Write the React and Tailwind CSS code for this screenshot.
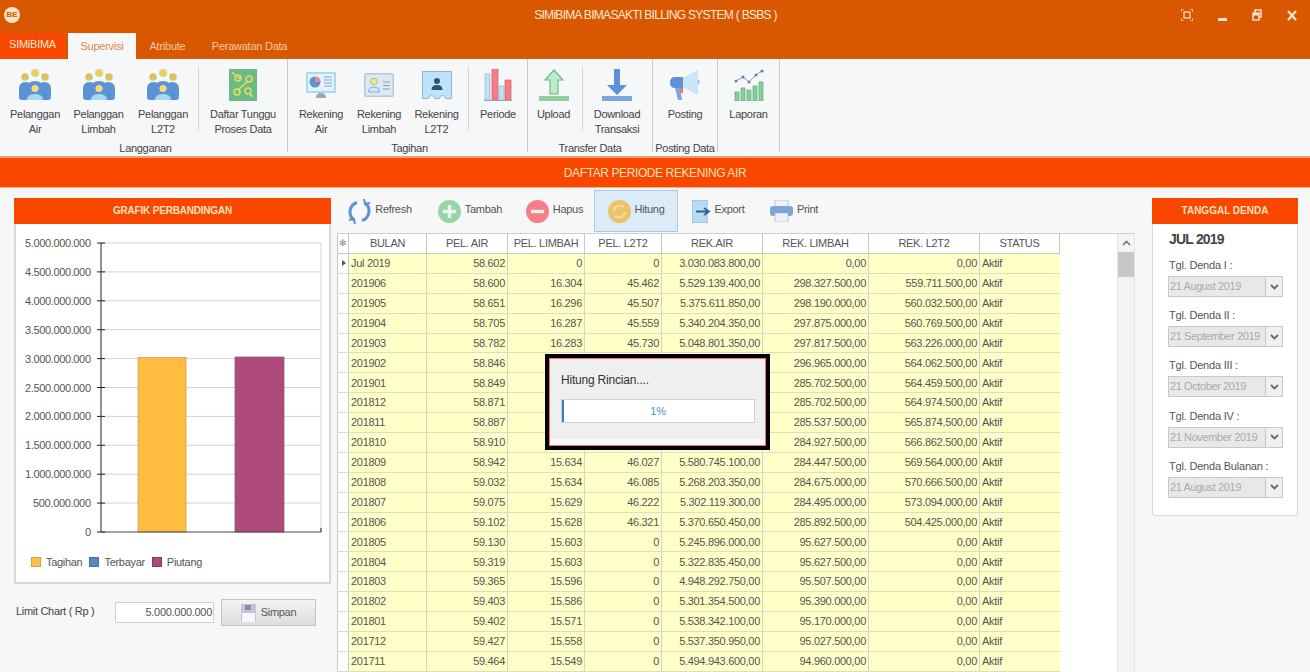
import { Fragment } from 'react'

const COLS = 'grid grid-cols-[12px_78px_81px_77px_77px_101px_106px_111px_80px]'

const HEADERS = ['BULAN', 'PEL. AIR', 'PEL. LIMBAH', 'PEL. L2T2', 'REK.AIR', 'REK. LIMBAH', 'REK. L2T2', 'STATUS']

const ROWS = [
  ['Jul 2019', '58.602', '0', '0', '3.030.083.800,00', '0,00', '0,00'],
  ['201906', '58.600', '16.304', '45.462', '5.529.139.400,00', '298.327.500,00', '559.711.500,00'],
  ['201905', '58.651', '16.296', '45.507', '5.375.611.850,00', '298.190.000,00', '560.032.500,00'],
  ['201904', '58.705', '16.287', '45.559', '5.340.204.350,00', '297.875.000,00', '560.769.500,00'],
  ['201903', '58.782', '16.283', '45.730', '5.048.801.350,00', '297.817.500,00', '563.226.000,00'],
  ['201902', '58.846', '', '', '', '296.965.000,00', '564.062.500,00'],
  ['201901', '58.849', '', '', '', '285.702.500,00', '564.459.500,00'],
  ['201812', '58.871', '', '', '', '285.702.500,00', '564.974.500,00'],
  ['201811', '58.887', '', '', '', '285.537.500,00', '565.874.500,00'],
  ['201810', '58.910', '', '', '', '284.927.500,00', '566.862.500,00'],
  ['201809', '58.942', '15.634', '46.027', '5.580.745.100,00', '284.447.500,00', '569.564.000,00'],
  ['201808', '59.032', '15.634', '46.085', '5.268.203.350,00', '284.675.000,00', '570.666.500,00'],
  ['201807', '59.075', '15.629', '46.222', '5.302.119.300,00', '284.495.000,00', '573.094.000,00'],
  ['201806', '59.102', '15.628', '46.321', '5.370.650.450,00', '285.892.500,00', '504.425.000,00'],
  ['201805', '59.130', '15.603', '0', '5.245.896.000,00', '95.627.500,00', '0,00'],
  ['201804', '59.319', '15.603', '0', '5.322.835.450,00', '95.627.500,00', '0,00'],
  ['201803', '59.365', '15.596', '0', '4.948.292.750,00', '95.507.500,00', '0,00'],
  ['201802', '59.403', '15.586', '0', '5.301.354.500,00', '95.390.000,00', '0,00'],
  ['201801', '59.402', '15.571', '0', '5.538.342.100,00', '95.170.000,00', '0,00'],
  ['201712', '59.427', '15.558', '0', '5.537.350.950,00', '95.027.500,00', '0,00'],
  ['201711', '59.464', '15.549', '0', '5.494.943.600,00', '94.960.000,00', '0,00'],
  ['', '', '', '', '', '', ''],
]

const DENDA = [
  ['Tgl. Denda I :', '21 August 2019'],
  ['Tgl. Denda II :', '21 September 2019'],
  ['Tgl. Denda III :', '21 October 2019'],
  ['Tgl. Denda IV :', '21 November 2019'],
  ['Tgl. Denda Bulanan :', '21 August 2019'],
]

const TICKS = ['5.000.000.000', '4.500.000.000', '4.000.000.000', '3.500.000.000', '3.000.000.000', '2.500.000.000', '2.000.000.000', '1.500.000.000', '1.000.000.000', '500.000.000', '0']

function PeopleIcon() {
  return (
    <svg width="32" height="33" viewBox="0 0 32 33">
      <circle cx="6" cy="8" r="3.800" fill="#d9c36a" />
      <circle cx="16" cy="4" r="4" fill="#e8cf6d" />
      <circle cx="26" cy="8" r="3.800" fill="#d9c36a" />
      <path d="M0 28V20q0-7 7-7 2 0 3 1 2-2 6-2t6 2q1-1 3-1 7 0 7 7v8q0 3-3 3H3q-3 0-3-3z" fill="#5b93d6" />
      <path d="M8 31q0-6 8-6t8 6z" fill="#a9d8f0" />
      <circle cx="16" cy="19.500" r="3.600" fill="#f4dc83" />
    </svg>
  )
}

function ProsesIcon() {
  return (
    <svg width="28" height="32" viewBox="0 0 28 32">
      <rect width="28" height="32" fill="#6dbb84" />
      <path d="M8 7l4 4M19 12L9 21M20 24l4 4M3 3l3 3" stroke="#d8e45c" strokeWidth="1.600" fill="none" />
      <circle cx="9" cy="9" r="3" fill="none" stroke="#e9d96a" strokeWidth="1.600" />
      <circle cx="20" cy="10" r="3" fill="none" stroke="#e9d96a" strokeWidth="1.600" />
      <circle cx="8" cy="23" r="3" fill="none" stroke="#e9d96a" strokeWidth="1.600" />
      <circle cx="19" cy="22" r="3" fill="none" stroke="#e9d96a" strokeWidth="1.600" />
    </svg>
  )
}

function RekAirIcon() {
  return (
    <svg width="30" height="26" viewBox="0 0 30 26">
      <rect width="30" height="21" rx="1" fill="#a9daf5" />
      <rect x="2" y="2" width="26" height="17" fill="#e4f3fb" />
      <circle cx="9" cy="10" r="5.500" fill="#5b93d6" />
      <path d="M9 10V4.500A5.500 5.500 0 0 1 14.500 10z" fill="#f08a8a" />
      <path d="M18 5h8M18 8h8M18 11h8M18 14h8" stroke="#7fa9c9" strokeWidth="1.200" />
      <path d="M10 26q0-5 5-5t5 5z" fill="#9aa7b3" />
    </svg>
  )
}

function RekLimbahIcon() {
  return (
    <svg width="30" height="24" viewBox="0 0 30 24">
      <rect width="30" height="24" rx="2" fill="#b9c6d3" />
      <rect x="1.500" y="1.500" width="27" height="21" rx="1" fill="#dbe9f5" />
      <circle cx="10" cy="8.500" r="3.200" fill="#f3e98a" stroke="#b2c25e" />
      <path d="M4.500 19q0-5 5.500-5t5.500 5z" fill="#cfe6f7" stroke="#7eaed6" />
      <path d="M19 9h7M19 12.500h7M19 16h7" stroke="#8e9eac" strokeWidth="1.200" />
    </svg>
  )
}

function RekL2t2Icon() {
  return (
    <svg width="30" height="28" viewBox="0 0 30 28">
      <path d="M.5.5h29v27h-6q0-3-3-3t-3 3h-5q0-3-3-3t-3 3h-6z" fill="#bfe3fa" stroke="#8fb6d3" />
      <circle cx="15" cy="10" r="3" fill="#33527a" />
      <path d="M9.500 19q0-5 5.500-5t5.500 5z" fill="#33527a" />
    </svg>
  )
}

function PeriodeIcon() {
  return (
    <svg width="28" height="32" viewBox="0 0 28 32">
      <rect x="1" y="5" width="5" height="26" fill="#c3e1f5" stroke="#8fb6d3" strokeWidth=".7" />
      <rect x="8" y="0" width="6" height="31" fill="#f47f85" stroke="#c8666c" strokeWidth=".7" />
      <rect x="15" y="17" width="5" height="14" fill="#c3e1f5" stroke="#8fb6d3" strokeWidth=".7" />
      <rect x="21" y="11" width="6" height="20" fill="#f47f85" stroke="#c8666c" strokeWidth=".7" />
      <path d="M0 31.500h28" stroke="#9aa7b3" />
    </svg>
  )
}

function UploadIcon() {
  return (
    <svg width="30" height="32" viewBox="0 0 30 32">
      <path d="M15 1l9 10h-5v14h-8V11H6z" fill="#bfeacb" stroke="#6dbb84" strokeWidth="1.200" />
      <rect y="27" width="30" height="5" fill="#8fd0a3" />
    </svg>
  )
}

function DownloadIcon() {
  return (
    <svg width="30" height="32" viewBox="0 0 30 32">
      <path d="M12 0h6v16h7L15 26 5 16h7z" fill="#5b93d6" />
      <rect y="27" width="30" height="5" fill="#7ba6d9" />
    </svg>
  )
}

function PostingIcon() {
  return (
    <svg width="32" height="32" viewBox="0 0 32 32">
      <path d="M14 9L29 1v25L14 18z" fill="#c8e6f8" />
      <path d="M29 10q3 3 0 6z" fill="#8fb6d3" />
      <path d="M6 8h8v11H6q-5 0-5-5.500T6 8z" fill="#5b93d6" />
      <path d="M6 19h5l2 12H9z" fill="#7ba6d9" />
      <rect x="11" y="19" width="3" height="5" fill="#ea7a80" />
    </svg>
  )
}

function LaporanIcon() {
  return (
    <svg width="30" height="32" viewBox="0 0 30 32">
      <path d="M2 12l7-4 6 5 7-7 6-4" fill="none" stroke="#8b9bc0" strokeWidth="1" />
      <g fill="#6d7fae">
        <circle cx="2" cy="12" r="1.600" />
        <circle cx="9" cy="8" r="1.600" />
        <circle cx="15" cy="13" r="1.600" />
        <circle cx="22" cy="6" r="1.600" />
        <circle cx="28" cy="2" r="1.600" />
      </g>
      <g fill="#86cf9c" stroke="#5ca878" strokeWidth=".7">
        <rect x="1" y="23" width="4" height="9" />
        <rect x="7" y="19" width="4" height="13" />
        <rect x="13" y="21" width="4" height="11" />
        <rect x="19" y="17" width="4" height="15" />
        <rect x="25" y="13" width="4" height="19" />
      </g>
    </svg>
  )
}

function RibbonItem({ icon, label, w }) {
  return (
    <div className={`flex shrink-0 flex-col items-center ${w}`}>
      <div className="flex h-[38px] items-center">{icon}</div>
      <div className="mt-[3px] whitespace-pre-line text-center text-[11px] leading-[14.5px] tracking-[-0.3px] text-[#444]">{label}</div>
    </div>
  )
}

function RibbonGroup({ title, items, w }) {
  return (
    <div className={`flex shrink-0 flex-col border-r border-[#c8c8c8] ${w}`}>
      <div className="flex flex-1 items-start pt-[7px]">
        {items.map((it, i) =>
          it === 'sep' ? (
            <div key={i} className="ml-[3px] mt-[1px] h-[64px] w-px shrink-0 bg-[#d4d4d4]" />
          ) : (
            <Fragment key={i}>{it}</Fragment>
          )
        )}
      </div>
      <div className="h-[12px] whitespace-nowrap text-center text-[11px] leading-[16px] tracking-[-0.3px] text-[#444]">{title}</div>
    </div>
  )
}

function Ribbon() {
  return (
    <div className="flex h-[99px] border-b-2 border-[#e8a070] bg-[#f6f7f8] pb-[4px]">
      <RibbonGroup
        title="Langganan"
        w="w-[288px] pl-[4px]"
        items={[
          <RibbonItem icon={<PeopleIcon />} label={'Pelanggan\nAir'} w="w-[62px]" />,
          <RibbonItem icon={<PeopleIcon />} label={'Pelanggan\nLimbah'} w="w-[65px]" />,
          <RibbonItem icon={<PeopleIcon />} label={'Pelanggan\nL2T2'} w="w-[64px]" />,
          'sep',
          <RibbonItem icon={<ProsesIcon />} label={'Daftar Tunggu\nProses Data'} w="w-[88px]" />,
        ]}
      />
      <RibbonGroup
        title="Tagihan"
        w="w-[240px] pl-[4px]"
        items={[
          <RibbonItem icon={<RekAirIcon />} label={'Rekening\nAir'} w="w-[58px]" />,
          <RibbonItem icon={<RekLimbahIcon />} label={'Rekening\nLimbah'} w="w-[58px]" />,
          <RibbonItem icon={<RekL2t2Icon />} label={'Rekening\nL2T2'} w="w-[57px]" />,
          'sep',
          <RibbonItem icon={<PeriodeIcon />} label="Periode" w="w-[58px]" />,
        ]}
      />
      <RibbonGroup
        title="Transfer Data"
        w="w-[125px]"
        items={[
          <RibbonItem icon={<UploadIcon />} label="Upload" w="w-[51px]" />,
          'sep',
          <RibbonItem icon={<DownloadIcon />} label={'Download\nTransaksi'} w="w-[68px]" />,
        ]}
      />
      <RibbonGroup title="Posting Data" w="w-[65px]" items={[<RibbonItem icon={<PostingIcon />} label="Posting" w="w-[64px]" />]} />
      <RibbonGroup title="" w="w-[62px]" items={[<RibbonItem icon={<LaporanIcon />} label="Laporan" w="w-[61px]" />]} />
    </div>
  )
}

function TitleBar() {
  return (
    <div className="h-[59px] bg-[#d95700]">
      <div className="flex h-[33px] items-center px-[4px] pb-[3px]">
        <div className="flex h-[16px] w-[16px] items-center justify-center rounded-full bg-[#fde3c4] text-[8px] font-bold leading-none text-[#d95700]">BE</div>
        <div className="flex-1 pl-[110px] text-center text-[12px] tracking-[-0.7px] text-[#fde9d0]">SIMiBIMA BIMASAKTI BILLING SYSTEM ( BSBS )</div>
        <div className="flex items-center gap-[25px] pr-[9px] text-[#fbe8d4]">
          <svg width="12" height="12" viewBox="0 0 12 12" fill="none" stroke="currentColor" strokeWidth="1.200">
            <path d="M0 3V0h3M9 0h3v3M12 9v3H9M3 12H0V9" />
            <rect x="3" y="3" width="6" height="6" />
          </svg>
          <div className="mt-[8px] h-[3px] w-[9px] bg-current" />
          <svg width="10" height="12" viewBox="0 0 10 12" fill="none" stroke="currentColor" strokeWidth="1.400">
            <rect x="1" y="4" width="6" height="7" />
            <path d="M3 4V1h6v7H7" />
            <path d="M1 5.500h6" strokeWidth="2" />
          </svg>
          <svg width="10" height="11" viewBox="0 0 10 11" stroke="currentColor" strokeWidth="2.200">
            <path d="M1 1l8 9M9 1l-8 9" />
          </svg>
        </div>
      </div>
      <div className="flex h-[26px] items-end text-[11px] tracking-[-0.25px]">
        <div className="flex h-[26px] w-[65px] items-center justify-center bg-[#f94700] pb-[3px] text-[#fde9d0]">SIMiBIMA</div>
        <div className="ml-[3px] flex h-[26px] w-[68px] items-center justify-center bg-[#f6f7f8] pt-[1px] text-[#d98a4a]">Supervisi</div>
        <div className="flex h-[26px] w-[63px] items-center justify-center pt-[1px] text-[#f6c9a0]">Atribute</div>
        <div className="flex h-[26px] w-[101px] items-center justify-center pt-[1px] text-[#f6c9a0]">Perawatan Data</div>
      </div>
    </div>
  )
}

function Chart() {
  const top = 8
  const step = 28.9
  const lines = TICKS.map((_, i) => top + i * step)
  return (
    <svg width="313" height="306" viewBox="0 0 313 306" className="block" fontFamily="'Liberation Sans', sans-serif">
      {lines.slice(0, 10).map((y, i) => (
        <path key={i} d={`M85 ${y}H305`} stroke="#d4d4d4" />
      ))}
      <path d="M305 8V297" stroke="#d4d4d4" />
      {TICKS.map((t, i) => (
        <text key={t} x="75" y={lines[i] + 4} textAnchor="end" fontSize="11" fill="#555" textLength={t.length > 1 ? (t.length === 11 ? 58 : 66) : undefined}>
          {t}
        </text>
      ))}
      {lines.map((y, i) => (
        <path key={i} d={`M81 ${y}H89`} stroke="#222" />
      ))}
      <path d="M85 8V297" stroke="#222" />
      <rect x="122" y="122.500" width="48" height="174.500" fill="#ffbc40" stroke="#b89a5a" strokeWidth=".7" />
      <rect x="219" y="122" width="49" height="175" fill="#ae4a7a" stroke="#7d5a6a" strokeWidth=".7" />
      <path d="M85 297H305" stroke="#444" />
      <path d="M305 293V297" stroke="#222" />
    </svg>
  )
}

function Legend({ color, label }) {
  return (
    <div className="flex items-center gap-[5px]">
      <span className={`h-[10px] w-[10px] border ${color}`} />
      <span>{label}</span>
    </div>
  )
}

function LeftPanel() {
  return (
    <div className="w-[317px] shrink-0">
      <div className="flex h-[26px] items-center justify-center bg-[#f94700] pb-[1px] text-[10px] font-bold tracking-[-0.2px] text-[#fde0b8]">GRAFIK PERBANDINGAN</div>
      <div className="h-[360px] border-2 border-t-0 border-[#d8d8d8] bg-white">
        <div className="pt-[11px]">
          <Chart />
        </div>
        <div className="ml-[15px] mt-[13px] flex gap-[7px] text-[11px] tracking-[-0.3px] text-[#555]">
          <Legend color="border-[#d9a040] bg-[#ffbc55]" label="Tagihan" />
          <Legend color="border-[#4a70a8] bg-[#5b84c4]" label="Terbayar" />
          <Legend color="border-[#8a3a62] bg-[#ae4a7a]" label="Piutang" />
        </div>
      </div>
      <div className="mt-[15px] flex items-center text-[11px] tracking-[-0.3px] text-[#444]">
        <div className="w-[101px] pb-[2px] pl-[2px]">Limit Chart ( Rp )</div>
        <div className="flex h-[21px] w-[99px] items-center justify-end border border-[#d0d0d0] bg-white pr-[1px] text-[#555]">5.000.000.000</div>
        <div className="ml-[7px] flex h-[27px] w-[95px] items-center justify-center gap-[5px] border border-[#c4c4c4] bg-gradient-to-b from-[#f3f3f3] to-[#dedede] text-[#555]">
          <svg width="15" height="18" viewBox="0 0 15 18">
            <rect width="15" height="18" rx="1" fill="#c7c4d8" />
            <rect x="1" y="9" width="13" height="9" fill="#f7f7fb" />
            <rect x="4" y="1" width="6" height="5" fill="#8f8aa8" />
          </svg>
          Simpan
        </div>
      </div>
    </div>
  )
}

function ToolButton({ icon, label, w, active }) {
  return (
    <div className={`flex h-[42px] items-center justify-center gap-[4px] text-[11px] tracking-[-0.3px] text-[#555] ${w} ${active ? 'ml-[2px] border border-[#a8c8e8] bg-[#dcebf8]' : ''}`}>
      {icon}
      <span className="pb-[3px]">{label}</span>
    </div>
  )
}

function CircleIcon({ bg, children }) {
  return (
    <svg width="23" height="25" viewBox="0 0 23 25">
      <circle cx="11.500" cy="12.500" r="11.500" fill={bg} />
      {children}
    </svg>
  )
}

function Toolbar() {
  return (
    <div className="flex h-[42px]">
      <ToolButton
        w="w-[86px]"
        label="Refresh"
        icon={
          <svg width="23" height="25" viewBox="0 0 23 25" fill="none" stroke="#5b93d6" strokeWidth="3">
            <path d="M9 3.500A10 10 0 0 0 6 21" />
            <path d="M14 21.500A10 10 0 0 0 17 4" />
            <path d="M16 0l1 5 5-1M7 25l-1-5-5 1" strokeWidth="2" />
          </svg>
        }
      />
      <ToolButton
        w="w-[94px]"
        label="Tambah"
        icon={
          <CircleIcon bg="#97d5a8">
            <path d="M11.500 6v13M5 12.500h13" stroke="#eaf7ee" strokeWidth="3.400" />
          </CircleIcon>
        }
      />
      <ToolButton
        w="w-[75px]"
        label="Hapus"
        icon={
          <CircleIcon bg="#f47f85">
            <path d="M5 12.500h13" stroke="#fdeced" strokeWidth="3.400" />
          </CircleIcon>
        }
      />
      <ToolButton
        w="w-[84px]"
        active
        label="Hitung"
        icon={
          <CircleIcon bg="#e9c46a">
            <path d="M6 12a6 6 0 0 1 10-4M17 13a6 6 0 0 1-10 4" fill="none" stroke="#f7dfa0" strokeWidth="2" />
          </CircleIcon>
        }
      />
      <ToolButton
        w="w-[80px]"
        label="Export"
        icon={
          <svg width="19" height="23" viewBox="0 0 19 23">
            <rect width="15" height="23" fill="#b9dcf5" stroke="#8fb6d3" />
            <path d="M4 11.500h11M12 8l5 3.500-5 3.500" fill="none" stroke="#2f5f9a" strokeWidth="1.800" />
          </svg>
        }
      />
      <ToolButton
        w="w-[72px]"
        label="Print"
        icon={
          <svg width="23" height="22" viewBox="0 0 23 22">
            <rect x="5" width="13" height="7" fill="#eef2f6" stroke="#a8b4c0" strokeWidth=".7" />
            <rect y="6" width="23" height="10" rx="3" fill="#7ba6d9" />
            <rect x="5" y="13" width="13" height="9" fill="#eef2f6" stroke="#a8b4c0" strokeWidth=".7" />
          </svg>
        }
      />
    </div>
  )
}

function Grid() {
  return (
    <div className="relative flex h-[439px] w-[798px] overflow-hidden border-t border-[#cfcfcf] bg-white text-[11px] tracking-[-0.3px] text-[#555]">
      <div className="w-[723px] shrink-0">
        <div className={`${COLS} h-[20px] border-b border-[#c8c8c8]`}>
          <div className="flex items-center justify-center border-x border-[#c8c8c8] text-[9px] text-[#888]">✻</div>
          {HEADERS.map(h => (
            <div key={h} className="flex items-center justify-center border-r border-[#c8c8c8]">{h}</div>
          ))}
        </div>
        {ROWS.map((r, i) => (
          <div key={i} className={`${COLS} h-[19.9px] border-b border-[#ddddc4] bg-[#ffffc8]`}>
            <div className="flex items-center justify-center border-x border-[#c8c8c8] bg-white">
              {i === 0 && <span className="ml-[1px] h-0 w-0 border-y-[3px] border-l-[4px] border-y-transparent border-l-[#555]" />}
            </div>
            <div className="flex items-center border-r border-[#d6d6c0] pl-[2px]">{r[0]}</div>
            {r.slice(1).map((v, j) => (
              <div key={j} className="flex items-center justify-end border-r border-[#d6d6c0] pr-[2px]">{v}</div>
            ))}
            <div className="flex items-center pl-[2px]">{r[0] && 'Aktif'}</div>
          </div>
        ))}
      </div>
      <div className="flex-1" />
      <div className="flex w-[18px] flex-col border-x border-[#e4e4e4] bg-[#f4f4f4]">
        <div className="flex h-[18px] items-center justify-center">
          <svg width="9" height="6" viewBox="0 0 9 6" fill="none" stroke="#777" strokeWidth="1.600">
            <path d="M1 5l3.500-3.500L8 5" />
          </svg>
        </div>
        <div className="h-[25px] bg-[#c8c8c8]" />
      </div>
      {/* dialog progres di atas grid */}
      <div className="absolute left-[208px] top-[120px] h-[96px] w-[225px] border-[4px] border-black">
        <div className="h-full border border-[#f47070]">
          <div className="h-full border-b-[6px] border-[#f8f8f8] bg-[#efefef] pl-[11px] pr-[10px] pt-[12px]">
            <div className="text-[12px] tracking-[-0.2px] text-[#333]">Hitung Rincian....</div>
            <div className="relative mt-[10px] flex h-[24px] items-center justify-center border border-[#cfcfcf] bg-white text-[#4a90c4]">
              <div className="absolute bottom-0 left-0 top-0 w-[2px] bg-[#3a7fb5]" />
              1%
            </div>
          </div>
        </div>
      </div>
    </div>
  )
}

function DendaPanel() {
  return (
    <div className="ml-[17px] mt-[10px] w-[146px] shrink-0">
      <div className="flex h-[26px] items-center justify-center bg-[#f94700] pb-[1px] text-[10px] font-bold tracking-[0px] text-[#fde0b8]">TANGGAL DENDA</div>
      <div className="h-[292px] rounded-b-[3px] border border-t-0 border-[#d8d8d8] bg-white pl-[15px] pr-[14px] pt-[7px]">
        <div className="pl-[1px] text-[14px] font-bold leading-[16px] tracking-[-0.8px] text-[#444]">JUL 2019</div>
        <div className="mt-[9px] flex flex-col gap-[9.2px]">
          {DENDA.map(([label, value]) => (
            <div key={label}>
              <div className="h-[20px] pl-[1px] text-[11px] leading-[19px] tracking-[-0.2px] text-[#555]">{label}</div>
              <div className="flex h-[21px] border border-[#c8c8c8] bg-[#e8e8e8] text-[11px] leading-[19px] tracking-[-0.4px] text-[#aaa]">
                <div className="flex-1 whitespace-nowrap pl-[1px]">{value}</div>
                <div className="flex w-[17px] items-center justify-center border-l border-[#c8c8c8] bg-[#f0f0f0]">
                  <svg width="9" height="6" viewBox="0 0 9 6" fill="none" stroke="#667" strokeWidth="1.800">
                    <path d="M1 1l3.500 3.500L8 1" />
                  </svg>
                </div>
              </div>
            </div>
          ))}
        </div>
      </div>
    </div>
  )
}

export default function App() {
  return (
    <div className="h-[672px] w-[1310px] overflow-hidden bg-[#f7f7f7] font-['Liberation_Sans',sans-serif]">
      <TitleBar />
      <Ribbon />
      <div className="flex h-[30px] items-center justify-center border-b border-[#f5b58c] bg-[#f94700] text-[12px] tracking-[-0.4px] text-[#fde0b8]">DAFTAR PERIODE REKENING AIR</div>
      <div className="flex pl-[14px]">
        <div className="mt-[10px]">
          <LeftPanel />
        </div>
        <div className="ml-[6px] mt-[2px]">
          <Toolbar />
          <div className="mt-[1px]">
            <Grid />
          </div>
        </div>
        <DendaPanel />
      </div>
    </div>
  )
}
